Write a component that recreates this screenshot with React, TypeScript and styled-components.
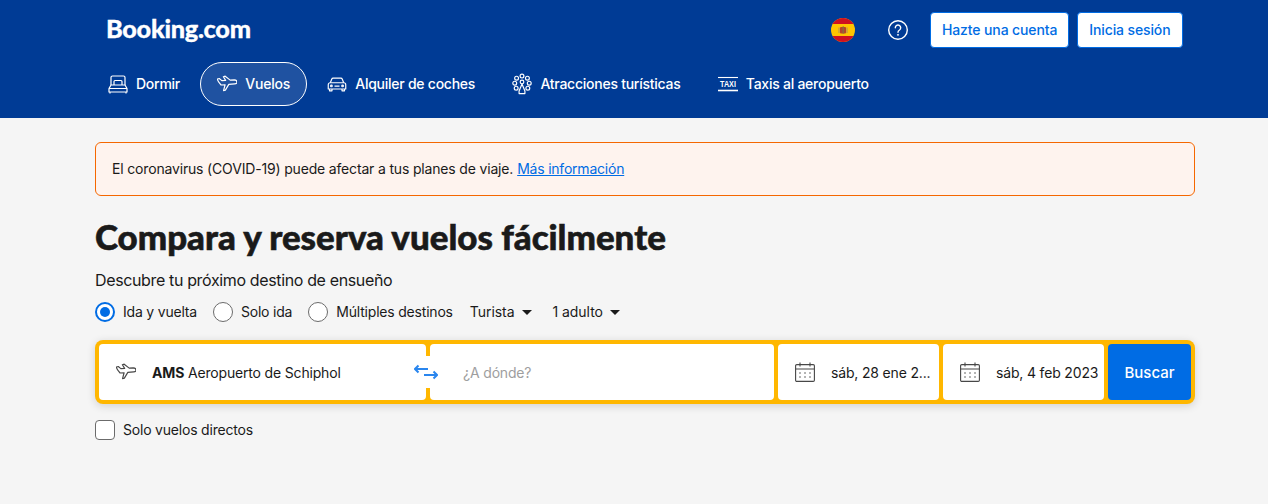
import React from 'react';
import styled, { createGlobalStyle } from 'styled-components';

const GlobalStyle = createGlobalStyle`
  body {
    margin: 0;
    background: #f5f5f5;
    font-family: Inter, "Liberation Sans", sans-serif;
    letter-spacing: -0.17px;
    color: #1a1a1a;
  }
`;

const BedIcon = () => (
  <svg width="20" height="20" viewBox="0 0 20 20" fill="none" stroke="currentColor" strokeWidth="1.2" strokeLinejoin="round">
    <path d="M3 11V3.500A1.500 1.500 0 0 1 4.500 2h11A1.500 1.500 0 0 1 17 3.500V11" />
    <path d="M6 11V7.500a1 1 0 0 1 1-1h6a1 1 0 0 1 1 1V11" />
    <path d="M3 11h14l2 3.500v3.500H1v-3.500zM1 14.500h18M2 18v1.500M18 18v1.500" />
  </svg>
);

const PlaneIcon = () => (
  <svg width="20" height="20" viewBox="1 2 22 22" fill="none" stroke="currentColor" strokeWidth="1.3" strokeLinejoin="round">
    <path d="M1.500 7.500l2-.5 2.800 2.300 4.200-.3L8 5l2-.6 5.500 4.300 4.500-.2c2 0 3 1.300 3 2.500 0 1-1 1.800-2.500 1.900l-6.500.5-3.800 6.300-2 .6 1.700-6.500-4.400.3C3.500 12 1.500 9.500 1.500 7.500z" />
  </svg>
);

const CarIcon = () => (
  <svg width="20" height="20" viewBox="0 0 24 24" fill="none" stroke="currentColor" strokeWidth="1.4" strokeLinejoin="round">
    <path d="M4 10.500l1.600-4.200A2 2 0 0 1 7.500 5h9a2 2 0 0 1 1.900 1.300L20 10.500" />
    <path d="M3.800 10.500h16.400A2.300 2.300 0 0 1 22.500 12.800V18h-21v-5.200a2.300 2.300 0 0 1 2.300-2.300zM3 18v2.200h3V18M18 18v2.200h3V18M9 14.500h6" />
    <circle cx="5.300" cy="14.300" r="1" />
    <circle cx="18.700" cy="14.300" r="1" />
  </svg>
);

const WheelIcon = () => (
  <svg width="20" height="22" viewBox="0 0 24 26" fill="none" stroke="currentColor" strokeWidth="1.400">
    <circle cx="12" cy="3.500" r="2.300" />
    <circle cx="5.500" cy="6" r="2.300" />
    <circle cx="18.500" cy="6" r="2.300" />
    <circle cx="3.300" cy="12" r="2.300" />
    <circle cx="20.700" cy="12" r="2.300" />
    <circle cx="5" cy="18" r="2.300" />
    <circle cx="19" cy="18" r="2.300" />
    <circle cx="12" cy="10.500" r="2.200" />
    <path d="M12 13l-3.500 8.500v3h7v-3z" strokeLinejoin="round" />
  </svg>
);

const TaxiIcon = () => (
  <svg width="20" height="20" viewBox="0 0 20 20" fill="none">
    <path d="M0 3.500h20" stroke="currentColor" strokeWidth="1.100" />
    <path d="M0 16.500h20" stroke="currentColor" strokeWidth="1.600" />
    <text x="12.500" y="13" transform="scale(0.8 1)" textAnchor="middle" fontFamily="Liberation Sans, sans-serif" fontSize="9" fontWeight="700" fill="currentColor" letterSpacing="0">
      TAXI
    </text>
  </svg>
);

const CalendarIcon = () => (
  <svg width="20" height="20" viewBox="0 0 20 20" fill="none" stroke="#474747" strokeWidth="1.100">
    <rect x="0.600" y="2.600" width="18.800" height="16.800" rx="1.200" />
    <path d="M.6 7h18.800M5 .5v4M15 .5v4" />
    <path d="M5 11h.01M10 11h.01M15 11h.01M5 15h.01M10 15h.01M15 15h.01" strokeWidth="1.500" strokeLinecap="round" />
  </svg>
);

const SwapIcon = () => (
  <svg width="24" height="24" viewBox="0 0 24 24" fill="none" stroke="#2a86ee" strokeWidth="2">
    <path d="M1 9h13M4.500 5.500L1 9l3.500 3.500" />
    <path d="M10 15h13M19.500 11.500L23 15l-3.500 3.500" />
  </svg>
);

const FlagIcon = () => (
  <svg width="24" height="24" viewBox="0 0 24 24">
    <defs>
      <clipPath id="flag-circle">
        <circle cx="12" cy="12" r="12" />
      </clipPath>
    </defs>
    <g clipPath="url(#flag-circle)">
      <rect width="24" height="24" fill="#ffc400" />
      <rect width="24" height="6" fill="#cf1020" />
      <rect y="18" width="24" height="6" fill="#cf1020" />
      <rect x="9" y="9" width="6" height="6.500" rx="1" fill="#b5432b" />
      <rect x="11.500" y="8.500" width="1.500" height="7" fill="#8a6a3a" />
      <rect x="7.500" y="9.500" width="1" height="5.500" fill="#b08a5a" />
      <rect x="15.500" y="9.500" width="1" height="5.500" fill="#b08a5a" />
    </g>
  </svg>
);

const HelpIcon = () => (
  <svg width="24" height="24" viewBox="0 0 24 24" fill="none" stroke="#fff" strokeWidth="1.400">
    <circle cx="12" cy="12" r="9.300" />
    <path d="M9.300 9.700a2.700 2.700 0 1 1 4.200 2.300c-1 .6-1.500 1.200-1.500 2.300" strokeLinecap="round" />
    <circle cx="12" cy="16.800" r=".6" fill="#fff" strokeWidth="0.800" />
  </svg>
);

const Header = styled.header`
  background: #003b95;
  height: 118px;
  box-sizing: border-box;
  padding-top: 12px;
`;

const Wrap = styled.div`
  width: 1100px;
  margin-left: 95px;
`;

const TopRow = styled.div`
  display: flex;
  align-items: center;
  height: 36px;
  padding: 0 12px 0 11px;
`;

const Logo = styled.div`
  font-family: Lato, sans-serif;
  font-weight: 900;
  font-size: 25.300px;
  letter-spacing: -0.3px;
  -webkit-text-stroke: 0.3px #fff;
  color: #fff;
  margin-right: auto;
  padding-bottom: 5px;
`;

const FlagSlot = styled.div`
  display: flex;
  margin-right: 31px;
`;

const HelpSlot = styled.div`
  display: flex;
  margin-right: 20px;
`;

const AuthButton = styled.button<{ $pad: number }>`
  height: 36px;
  padding: 0 ${(p) => p.$pad}px 2px;
  margin-left: 8px;
  background: #fff;
  border: 1px solid #006ce4;
  border-radius: 4px;
  font: 500 14px Inter, sans-serif;
  letter-spacing: -0.12px;
  color: #006ce4;
  &:first-of-type {
    margin-left: 0;
  }
`;

const Nav = styled.nav`
  display: flex;
  gap: 3.300px;
  margin: 14px 0 0 -4px;
`;

const NavItem = styled.a<{ $active?: boolean }>`
  display: flex;
  align-items: center;
  gap: 8px;
  height: 44px;
  box-sizing: border-box;
  padding: 0 16px;
  border: 1px solid ${(p) => (p.$active ? '#fff' : 'transparent')};
  border-radius: 22px;
  background: ${(p) => (p.$active ? 'rgba(255,255,255,0.12)' : 'transparent')};
  color: #fff;
  font-size: 14px;
  font-weight: 500;
  letter-spacing: -0.25px;
`;

const TextLine = styled.span`
  margin-bottom: 2px;
`;

const Main = styled.main`
  padding-top: 24px;
`;

const Alert = styled.div`
  height: 54px;
  box-sizing: border-box;
  display: flex;
  align-items: center;
  gap: 4px;
  padding: 0 16px 2px;
  background: #fef3ee;
  border: 1px solid #f56700;
  border-radius: 6px;
  font-size: 14px;
  a {
    color: #006ce4;
    letter-spacing: -0.22px;
    text-decoration: underline;
  }
`;

const Title = styled.h1`
  margin: 21px 0 0;
  font-family: Lato, sans-serif;
  font-weight: 900;
  font-size: 34.900px;
  line-height: 40px;
  letter-spacing: 0;
  -webkit-text-stroke: 0.6px #1a1a1a;
  color: #1a1a1a;
`;

const Subtitle = styled.p`
  margin: 13px 0 0;
  font-size: 16px;
  line-height: 20px;
  letter-spacing: -0.36px;
`;

const Options = styled.div`
  display: flex;
  align-items: center;
  height: 24px;
  margin-top: 10px;
  font-size: 14px;
  letter-spacing: -0.2px;
`;

const RadioLabel = styled.label`
  display: flex;
  align-items: center;
  gap: 8px;
  margin-right: 16px;
`;

const RadioDot = styled.span<{ $checked?: boolean }>`
  width: 20px;
  height: 20px;
  box-sizing: border-box;
  border-radius: 50%;
  background: #fff;
  border: ${(p) => (p.$checked ? '2px solid #006ce4' : '1px solid #6b6b6b')};
  display: flex;
  align-items: center;
  justify-content: center;
  &::after {
    content: '';
    display: ${(p) => (p.$checked ? 'block' : 'none')};
    width: 10px;
    height: 10px;
    border-radius: 50%;
    background: #006ce4;
  }
`;

const Dropdown = styled.div`
  display: flex;
  align-items: center;
  gap: 7px;
  margin-left: 1px;
  margin-right: 20px;
  letter-spacing: -0.05px;
  &::after {
    content: '';
    border-left: 5px solid transparent;
    border-right: 5px solid transparent;
    border-top: 5px solid #1a1a1a;
  }
`;

const SearchBox = styled.div`
  position: relative;
  display: flex;
  gap: 4px;
  height: 64px;
  box-sizing: border-box;
  margin-top: 16px;
  padding: 4px;
  background: #ffb700;
  border-radius: 8px;
  box-shadow: 0 2px 8px rgba(26, 26, 26, 0.16);
`;

const Field = styled.div<{ $width: number; $padLeft: number }>`
  display: flex;
  align-items: center;
  width: ${(p) => p.$width}px;
  box-sizing: border-box;
  gap: 16px;
  padding-left: ${(p) => p.$padLeft}px;
  background: #fff;
  border-radius: 4px;
  font-size: 14px;
  white-space: nowrap;
  color: #1a1a1a;
  svg {
    flex-shrink: 0;
  }
  b {
    font-weight: 700;
  }
`;

const FieldIcon = styled.span`
  display: flex;
  color: #474747;
`;

const Placeholder = styled.span`
  color: #9e9e9e;
`;

const SwapButton = styled.div`
  position: absolute;
  left: 315px;
  top: 16px;
  width: 32px;
  height: 32px;
  background: #fff;
  display: flex;
  align-items: center;
  justify-content: center;
`;

const SearchButton = styled.button`
  flex: 1;
  border: 0;
  border-radius: 4px;
  background: #006ce4;
  color: #fff;
  font: 500 15px Inter, sans-serif;
`;

const DirectRow = styled.label`
  display: flex;
  align-items: center;
  gap: 8px;
  margin-top: 16px;
  font-size: 14px;
  letter-spacing: -0.2px;
`;

const CheckBox = styled.span`
  width: 20px;
  height: 20px;
  box-sizing: border-box;
  background: #fff;
  border: 1px solid #6b6b6b;
  border-radius: 4px;
`;

const navItems = [
  { label: 'Dormir', icon: <BedIcon /> },
  { label: 'Vuelos', icon: <PlaneIcon />, active: true },
  { label: 'Alquiler de coches', icon: <CarIcon /> },
  { label: 'Atracciones turísticas', icon: <WheelIcon /> },
  { label: 'Taxis al aeropuerto', icon: <TaxiIcon /> },
];

const App = () => {
  return (
    <>
      <GlobalStyle />
      <Header>
        <Wrap>
          <TopRow>
            <Logo>Booking.com</Logo>
            <FlagSlot>
              <FlagIcon />
            </FlagSlot>
            <HelpSlot>
              <HelpIcon />
            </HelpSlot>
            <AuthButton $pad={10.5}>Hazte una cuenta</AuthButton>
            <AuthButton $pad={11.5}>Inicia sesión</AuthButton>
          </TopRow>
          <Nav>
            {navItems.map((item) => (
              <NavItem key={item.label} $active={item.active}>
                {item.icon}
                <TextLine>{item.label}</TextLine>
              </NavItem>
            ))}
          </Nav>
        </Wrap>
      </Header>
      <Main>
        <Wrap>
          <Alert>
            <span>El coronavirus (COVID-19) puede afectar a tus planes de viaje.</span>
            <a>Más información</a>
          </Alert>
          <Title>Compara y reserva vuelos fácilmente</Title>
          <Subtitle>Descubre tu próximo destino de ensueño</Subtitle>
          <Options>
            <RadioLabel>
              <RadioDot $checked />
              <TextLine>Ida y vuelta</TextLine>
            </RadioLabel>
            <RadioLabel>
              <RadioDot />
              <TextLine>Solo ida</TextLine>
            </RadioLabel>
            <RadioLabel>
              <RadioDot />
              <TextLine>Múltiples destinos</TextLine>
            </RadioLabel>
            <Dropdown>
              <TextLine>Turista</TextLine>
            </Dropdown>
            <Dropdown>
              <TextLine>1 adulto</TextLine>
            </Dropdown>
          </Options>
          <SearchBox>
            <Field $width={327} $padLeft={17}>
              <FieldIcon>
                <PlaneIcon />
              </FieldIcon>
              <span>
                <b>AMS</b> Aeropuerto de Schiphol
              </span>
            </Field>
            <Field $width={344} $padLeft={33}>
              <Placeholder>¿A dónde?</Placeholder>
            </Field>
            <Field $width={161} $padLeft={17}>
              <CalendarIcon />
              <span>sáb, 28 ene 2...</span>
            </Field>
            <Field $width={161} $padLeft={17}>
              <CalendarIcon />
              <span>sáb, 4 feb 2023</span>
            </Field>
            <SearchButton>Buscar</SearchButton>
            <SwapButton>
              <SwapIcon />
            </SwapButton>
          </SearchBox>
          <DirectRow>
            <CheckBox />
            <TextLine>Solo vuelos directos</TextLine>
          </DirectRow>
        </Wrap>
      </Main>
    </>
  );
};

export default App;
